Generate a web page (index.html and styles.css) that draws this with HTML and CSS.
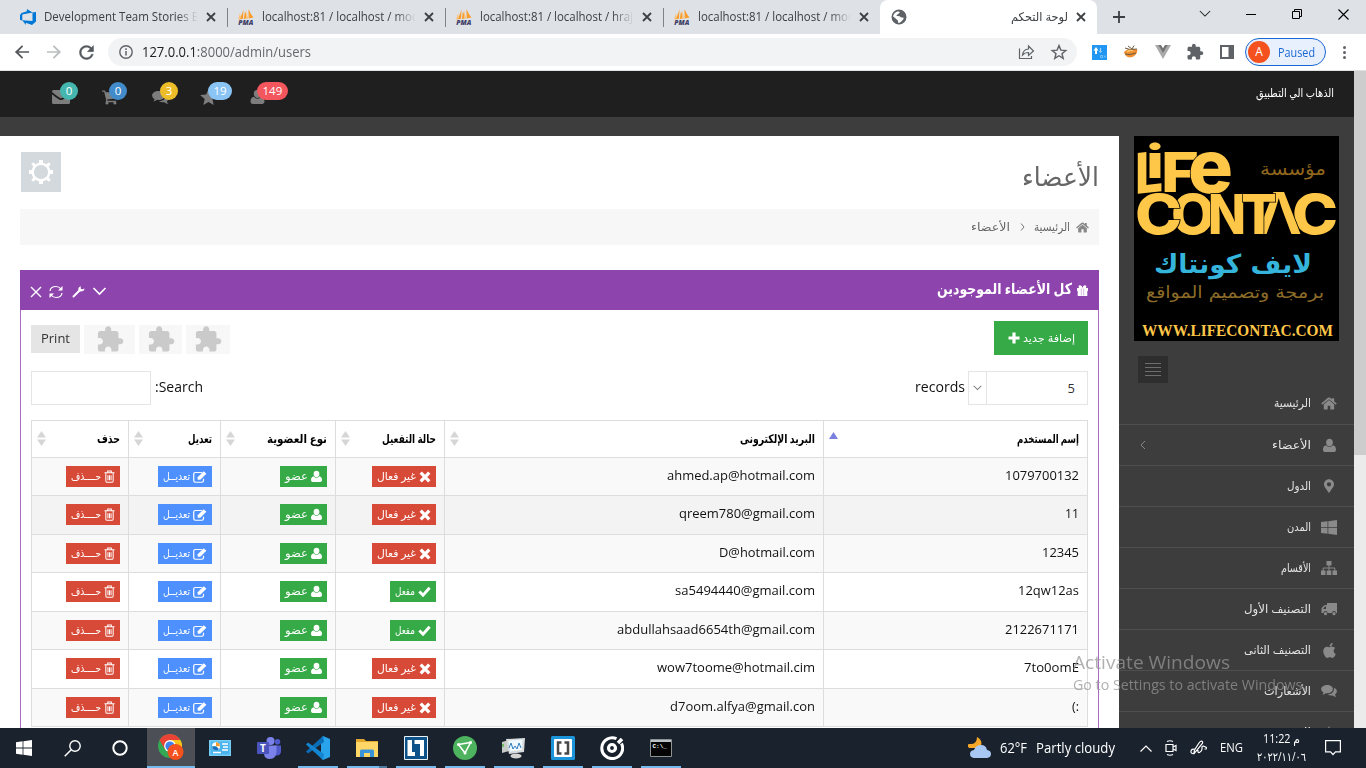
FILE: index.html
```html
<!DOCTYPE html>
<html lang="ar">
<head>
<meta charset="utf-8">
<title>لوحة التحكم</title>
<link rel="stylesheet" href="styles.css">
</head>
<body>
<svg class="sprite" width="0" height="0">
  <symbol id="x" viewBox="0 0 10 10"><path d="M1 1l8 8M9 1L1 9" stroke="currentColor" stroke-width="1.8" fill="none"/></symbol>
  <symbol id="pma" viewBox="0 0 16 16"><path d="M5.500 0Q4 7 .5 10.500L5 9.800zM7 2.500L5.800 10l4-.8zM10.500 0l.2 9.500L15.500 8.500Q13 6 10.500 0z" fill="#f89c2c"/><path d="M2 4l1 5-3 1.500zM8 1l2 8-2 .5z" fill="#fbc581"/><text x="0.300" y="15.500" textLength="15" lengthAdjust="spacingAndGlyphs" font-family="Open Sans, sans-serif" font-size="6.500" font-weight="800" font-style="italic" fill="#3e4068">PMA</text></symbol>
  <symbol id="user" viewBox="0 0 14 16"><path d="M7 .8c2.100 0 3.700 1.600 3.700 3.900S9.100 9 7 9 3.300 7 3.300 4.700 4.900.8 7 .8zM3.500 7.700C4.500 9 5.700 9.700 7 9.700S9.500 9 10.500 7.700c2.300.3 3.500 2 3.500 4.800 0 1.500-1 2.500-2.400 2.500H2.400C1 15 0 14 0 12.500c0-2.800 1.200-4.500 3.500-4.800z" fill="currentColor"/></symbol>
  <symbol id="home" viewBox="0 0 18 15"><path d="M9 3.600l6 5V13.500q0 .8-.8.800H10.500V10h-3v4.300H3.800Q3 14.300 3 13.500V8.600zM9 .5q.8 0 1.300.5L12.300 2.700V1.300h2.600v3.600L17.900 7.500l-1.200 1.300L9 2.500 1.300 8.800.1 7.500 7.700 1Q8.200.5 9 .5z" fill="currentColor"/></symbol>
  <symbol id="chats" viewBox="0 0 18 16"><path d="M7 1c3.700 0 6.500 2.100 6.500 4.800S10.700 10.600 7 10.600q-.8 0-1.600-.1Q4 12 1.300 12.200 2.500 11 2.700 9.600 0 8.200 0 5.800C0 3.100 3.300 1 7 1z" fill="currentColor"/><path d="M14.700 4.300C16.800 5.200 18 6.600 18 8.400q0 2.200-2.200 3.500.3 1.600 1.700 2.700-2.800 0-4.400-1.600-3.400.5-5.800-1.100 7-.2 7.500-5.900z" fill="currentColor"/></symbol>
  <symbol id="mail" viewBox="0 0 18 14"><path d="M0 1.500Q0 0 1.500 0h15Q18 0 18 1.500v.3Q17 3.500 9 8.600 1 3.500 0 1.800zM0 4.200Q3 7 7.500 9.700q1.500.8 3 0Q15 7 18 4.200v8.300q0 1.500-1.500 1.500h-15Q0 14 0 12.500z" fill="currentColor"/></symbol>
  <symbol id="cart" viewBox="0 0 17 15"><path d="M0 0h3.200l.8 2H17v6.200L5.500 9.500V11H15v1.500H4L4.300 9.500 2.300 1.500H0z" fill="currentColor"/><circle cx="5.300" cy="13.500" r="1.500" fill="currentColor"/><circle cx="13.700" cy="13.500" r="1.500" fill="currentColor"/></symbol>
  <symbol id="star" viewBox="2 2 20 19"><path d="M12 17.300l6.200 3.700-1.600-7L22 9.200l-7.200-.6L12 2 9.200 8.600 2 9.200 7.500 14l-1.700 7z" fill="currentColor"/></symbol>
  <symbol id="puzzle" viewBox="0 0 24 24"><path d="M20.500 11H19V7c0-1.100-.9-2-2-2h-4V3.500C13 2.120 11.880 1 10.500 1S8 2.120 8 3.500V5H4c-1.100 0-1.990.9-1.990 2v3.800H3.500c1.490 0 2.700 1.210 2.700 2.700s-1.210 2.700-2.700 2.700H2V20c0 1.100.9 2 2 2h3.800v-1.500c0-1.490 1.210-2.700 2.700-2.700 1.490 0 2.700 1.210 2.700 2.700V22H17c1.100 0 2-.9 2-2v-4h1.500c1.380 0 2.500-1.120 2.500-2.500S21.880 11 20.500 11z" fill="currentColor"/></symbol>
  <symbol id="trash" viewBox="0 0 12 14"><path d="M4 2.500V1h4v1.500M.5 3h11M2 3.500V12q0 1.300 1 1.300h6q1 0 1-1.300V3.500M4.300 5.500v5.500M6 5.500v5.500M7.700 5.500v5.500" stroke="currentColor" fill="none" stroke-width="1.100"/></symbol>
  <symbol id="edit" viewBox="0 0 15 13"><path d="M9.500 1.600H2.500Q.7 1.600.7 3.300v7Q.7 12.200 2.500 12.200H9.500q1.800 0 1.800-1.900V8.300" stroke="currentColor" stroke-width="1.300" fill="none"/><path d="M5 6.700L11.500.3l2.900 2.700-6.600 6.500H5z" fill="currentColor"/></symbol>
  <symbol id="cross" viewBox="0 0 12 12"><path d="M1.700 1.700l8.600 8.600M10.300 1.700l-8.600 8.600" stroke="currentColor" stroke-width="3.300" fill="none"/></symbol>
  <symbol id="check" viewBox="0 0 14 12"><path d="M1.400 6l4 4L12.600 2" stroke="currentColor" stroke-width="3.200" fill="none"/></symbol>
  <symbol id="down" viewBox="0 0 14 9"><path d="M1 1l6 6 6-6" stroke="currentColor" stroke-width="1.600" fill="none"/></symbol>
  <symbol id="sort" viewBox="0 0 9 15"><path d="M4.500 0L9 6.500H0zM0 8.500h9L4.500 15z" fill="#d6d6d6"/></symbol>
</svg>

<header class="tabs">
  <div class="tab first">
    <svg width="16" height="16" viewBox="0 0 16 16"><path d="M16 3v9.600l-4 3.300-6.200-2.200v2.200L2.300 11.300l10.200.8V3.400zM12.600 3.500L6.900 0v2.300L1.600 3.900 0 6v4.700l2.300 1V5.500z" fill="#0078d7"/></svg>
    <span class="tabtext"><span class="fit" data-w="162">Development Team Stories Bo</span></span><svg width="10" height="10"><use href="#x"/></svg>
  </div>
  <div class="tab"><svg width="16" height="16"><use href="#pma"/></svg><span class="tabtext"><span class="fit" data-w="157">localhost:81 / localhost / mod</span></span><svg width="10" height="10"><use href="#x"/></svg></div>
  <div class="tab"><svg width="16" height="16"><use href="#pma"/></svg><span class="tabtext"><span class="fit" data-w="153">localhost:81 / localhost / hraj</span></span><svg width="10" height="10"><use href="#x"/></svg></div>
  <div class="tab last"><svg width="16" height="16"><use href="#pma"/></svg><span class="tabtext"><span class="fit" data-w="157">localhost:81 / localhost / mod</span></span><svg width="10" height="10"><use href="#x"/></svg></div>
  <div class="tab active">
    <svg width="18" height="18" viewBox="0 0 24 24"><circle cx="12" cy="12" r="9.500" fill="#5f6368"/><path d="M3.500 10.500Q5 6 9 4.500q5-.5 3.500 2L10 8.500q-2 .5-1 2l4 .5q1.500 2 3.500 1.500 2-.5 1.500 2l-2.500 3q-3 3-4.500 2.500l-.5-3.500-3-2.500z" fill="#fff"/><path d="M12 8l3 1.500 1 3 3-1V8l-4-3z" fill="#5f6368"/><circle cx="12" cy="12" r="9" fill="none" stroke="#5f6368" stroke-width="2"/></svg>
    <span class="tabtext ar" dir="rtl"><span class="fit" data-w="57">لوحة التحكم</span></span><svg width="10" height="10"><use href="#x"/></svg>
  </div>
  <svg class="plus" width="12" height="12" viewBox="0 0 12 12"><path d="M6 0v12M0 6h12" stroke="#3c4043" stroke-width="1.800"/></svg>
  <div class="winctl">
    <svg width="12" height="8" viewBox="0 0 14 9"><path d="M1 1l6 6 6-6" stroke="#222" stroke-width="1.200" fill="none"/></svg>
    <svg width="10" height="10" viewBox="0 0 10 10"><path d="M0 5.500h10" stroke="#000"/></svg>
    <svg width="10" height="10" viewBox="0 0 10 10"><path d="M.5 2.500h7v7h-7zM2.500 2.500v-2h7v7h-2" stroke="#000" fill="none"/></svg>
    <svg width="11" height="11" viewBox="0 0 11 11"><path d="M.5.5l10 10M10.500.5l-10 10" stroke="#000" stroke-width="1.100"/></svg>
  </div>
</header>

<div class="toolbar">
  <span class="slot"><svg width="20" height="20" viewBox="0 0 24 24"><path d="M20.500 11H7.800l5.600-5.600L12 4l-8.500 8 8.500 8 1.400-1.400L7.800 13h12.700z" fill="#55595e"/></svg></span>
  <span class="slot"><svg width="20" height="20" viewBox="0 0 24 24"><path d="M3.500 11h12.700l-5.600-5.600L12 4l8.500 8-8.500 8-1.400-1.400 5.600-5.600H3.500z" fill="#bbbdbf"/></svg></span>
  <span class="slot"><svg width="21" height="21" viewBox="0 0 24 24"><path d="M17.650 6.350C16.200 4.900 14.210 4 12 4c-4.420 0-7.990 3.580-7.990 8s3.570 8 7.990 8c3.730 0 6.840-2.550 7.730-6h-2.080c-.82 2.330-3.040 4-5.650 4-3.310 0-6-2.690-6-6s2.690-6 6-6c1.660 0 3.140.69 4.220 1.780L13 11h7V4l-2.350 2.350z" fill="#55595e" stroke="#55595e" stroke-width=".5"/></svg></span>
  <div class="omni">
    <svg width="14" height="14" viewBox="0 0 14 14"><circle cx="7" cy="7" r="6.200" fill="none" stroke="#5f6368" stroke-width="1.400"/><path d="M7 6v4.500M7 3.300v1.600" stroke="#5f6368" stroke-width="1.500"/></svg>
    <span class="url"><span class="fit" data-w="169"><b>127.0.0.1</b>:8000/admin/users</span></span>
    <svg width="17" height="17" viewBox="0 0 17 17"><path d="M1.500 4.500v10h12V12M4.500 11q.5-5.500 6-6V2l5 5-5 4.500V8.500Q7 8.300 4.500 11z" fill="none" stroke="#5f6368" stroke-width="1.200"/></svg>
    <svg width="18" height="18" viewBox="0 0 24 24"><path d="M12 3.500l2.500 6 6.500.5-5 4.200 1.600 6.300L12 17l-5.600 3.500L8 14.200 3 10l6.500-.5z" fill="none" stroke="#5f6368" stroke-width="1.900"/></svg>
  </div>
  <span class="slot"><svg width="15" height="15" viewBox="0 0 15 15"><path d="M0 0h15v15H0z" fill="#2196f3"/><path d="M4 9V4" stroke="#fff" stroke-width="2"/><path d="M8.500 3v3" stroke="#9fd3fb" stroke-width="1.200"/><path d="M1.500 5.500L4 2l2.500 3.500z" fill="#fff"/><path d="M6.800 6h3.400L8.500 8z" fill="#9fd3fb"/><path d="M8.500 10.500h2v2h-2zM12 10.500l2 2M14 10.500l-2 2" stroke="#8cc8fa" stroke-width=".8" fill="none"/></svg></span>
  <span class="slot"><svg width="16" height="14" viewBox="0 0 16 14"><path d="M1 7Q5 2 14.500 4.500q-.5 7-7.500 8Q2 12 1 7z" fill="#ee8e2e"/><path d="M2 3l5 1.500L14 4M5 1l4 3 2-3.500M2 9l5 .5 6-1.500" stroke="#6b5a48" fill="none"/><path d="M4 7q3-3 6-1" stroke="#fcc768" stroke-width="1.500" fill="none"/></svg></span>
  <span class="slot"><svg width="16" height="14" viewBox="0 0 16 14"><path d="M0 0h3.500L8 7.500 12.500 0H16L8 14z" fill="#aaa"/><path d="M3.200 0H6l2 3.300L10 0h2.800L8 8z" fill="#737373"/></svg></span>
  <span class="slot grey"><svg width="18" height="18"><use href="#puzzle"/></svg></span>
  <span class="slot"><svg width="14" height="14" viewBox="0 0 14 14"><path d="M1 1h12v12H1z" stroke="#5f6368" stroke-width="2" fill="none"/><path d="M8.500 1H13v12H8.500z" fill="#5f6368"/></svg></span>
  <div class="pill"><span class="avatar">A</span><span class="fit" data-w="37">Paused</span></div>
  <span class="slot more"><i></i><i></i><i></i></span>
</div>

<div class="viewport">
<div class="page" dir="rtl">
  <div class="topnav">
    <span class="fit applink" data-w="78">الذهاب الي التطبيق</span>
    <div class="notes" dir="ltr">
      <span class="note"><svg width="18" height="14"><use href="#mail"/></svg><em class="teal">0</em></span>
      <span class="note"><svg width="16" height="15"><use href="#cart"/></svg><em class="blue">0</em></span>
      <span class="note"><svg width="17" height="15"><use href="#chats"/></svg><em class="gold">3</em></span>
      <span class="note"><svg width="17" height="16"><use href="#star"/></svg><em class="sky">19</em></span>
      <span class="note"><svg width="15" height="16"><use href="#user"/></svg><em class="red">149</em></span>
    </div>
  </div>
  <div class="columns">
    <aside class="side">
      <svg class="logo" width="205" height="205" viewBox="0 0 205 205" direction="ltr">
        <rect width="205" height="205"/>
        <g class="mark" fill="#fec748" font-family="Inter, sans-serif" font-weight="800">
          <text x="1" y="56" font-size="56" textLength="28" lengthAdjust="spacingAndGlyphs" transform="skewY(-6) translate(0 2)">L</text>
          <text x="12" y="42" font-size="46" textLength="18" lengthAdjust="spacingAndGlyphs">i</text>
          <text x="27" y="56" font-size="55" textLength="38" lengthAdjust="spacingAndGlyphs">F</text>
          <text x="54" y="57" font-size="74" textLength="45" lengthAdjust="spacingAndGlyphs">e</text>
          <text x="158" y="98" font-size="55" textLength="46" lengthAdjust="spacingAndGlyphs">C</text>
          <text x="37" y="98" font-size="55" textLength="44" lengthAdjust="spacingAndGlyphs">O</text>
          <text x="1" y="98" font-size="55" textLength="47" lengthAdjust="spacingAndGlyphs">C</text>
          <text x="74" y="98" font-size="55" textLength="38" lengthAdjust="spacingAndGlyphs">N</text>
          <text x="122" y="98" font-size="58" textLength="46" lengthAdjust="spacingAndGlyphs" font-weight="600">Λ</text>
          <text x="107" y="98" font-size="55" textLength="36" lengthAdjust="spacingAndGlyphs">T</text>
        </g>
        <g font-family="DejaVu Sans, sans-serif" direction="rtl">
          <text x="192" y="39" font-size="18" textLength="66" lengthAdjust="spacingAndGlyphs" fill="#91671d">مؤسسة</text>
          <text x="178" y="137" font-size="26" font-weight="700" textLength="158" lengthAdjust="spacingAndGlyphs" fill="#36b5dc">لايف كونتاك</text>
          <text x="190" y="162" font-size="17" textLength="178" lengthAdjust="spacingAndGlyphs" fill="#8c6c28">برمجة وتصميم المواقع</text>
        </g>
        <text x="8" y="200" font-size="17.500" font-family="Liberation Serif, serif" font-weight="700" textLength="191" lengthAdjust="spacingAndGlyphs" fill="#fec748">WWW.LIFECONTAC.COM</text>
      </svg>
      <div class="toggle"><i></i><i></i><i></i><i></i></div>
      <ul class="menu">
        <li><span class="mi"><svg width="16" height="13"><use href="#home"/></svg></span><span class="fit" data-w="37">الرئيسية</span></li>
        <li><span class="mi"><svg width="13" height="15"><use href="#user"/></svg></span><span class="fit" data-w="39">الأعضاء</span><svg class="arrow" width="6" height="10" viewBox="0 0 6 10"><path d="M5 1L1 5l4 4" stroke="#888" fill="none"/></svg></li>
        <li><span class="mi"><svg width="10" height="14" viewBox="0 0 384 512"><path d="M172.268 501.670C26.970 291.031 0 269.413 0 192 0 85.961 85.961 0 192 0s192 85.961 192 192c0 77.413-26.970 99.031-172.268 309.670-9.535 13.774-29.930 13.773-39.464 0zM192 272c44.183 0 80-35.817 80-80s-35.817-80-80-80-80 35.817-80 80 35.817 80 80 80z" fill="currentColor"/></svg></span><span class="fit" data-w="24">الدول</span></li>
        <li><span class="mi"><svg width="16" height="17" viewBox="0 0 448 512" preserveAspectRatio="none"><path d="M0 93.700l183.600-25.300v177.400H0V93.700zm0 324.600l183.600 25.300V268.400H0v149.900zm203.800 28L448 480V268.400H203.800v177.900zm0-380.600v180.100H448V32L203.800 65.700z" fill="currentColor"/></svg></span><span class="fit" data-w="24">المدن</span></li>
        <li><span class="mi"><svg width="16" height="14" viewBox="0 0 16 14"><path d="M5.500 0h5v4.500h-5zM0 9.500h4.500V14H0zM5.700 9.500h4.600V14H5.700zM11.500 9.500H16V14h-4.500z" fill="currentColor"/><path d="M8 4v6M2.200 10V7h11.600v3" stroke="currentColor" fill="none"/></svg></span><span class="fit" data-w="30">الأقسام</span></li>
        <li><span class="mi"><svg width="16" height="13" viewBox="0 0 16 13"><path d="M6 0h10v10h-1a2 2 0 0 0-4 0H6.500a2 2 0 0 0-4 0H.5V6Q.5 5 1.500 4L3 2.500Q3.500 2 4.500 2H6zM2 6h3V3.500H4z" fill="currentColor" fill-rule="evenodd"/><circle cx="4.500" cy="10.700" r="1.600" fill="currentColor"/><circle cx="13" cy="10.700" r="1.600" fill="currentColor"/></svg></span><span class="fit" data-w="67">التصنيف الأول</span></li>
        <li><span class="mi"><svg width="13" height="17" viewBox="0 0 384 512"><path d="M318.700 268.700c-.2-36.700 16.400-64.400 50-84.800-18.800-26.900-47.200-41.700-84.700-44.600-35.500-2.800-74.300 20.700-88.500 20.700-15 0-49.400-19.700-76.400-19.700C63.300 141.200 4 184.800 4 273.500q0 39.300 14.400 81.200c12.800 36.700 59 126.700 107.200 125.200 25.200-.6 43-17.900 75.800-17.900 31.800 0 48.300 17.900 76.400 17.900 48.600-.7 90.400-82.500 102.600-119.300-65.200-30.700-61.700-90-61.700-91.900zm-56.600-164.200c27.300-32.400 24.800-61.900 24-72.500-24.100 1.400-52 16.400-67.900 34.900-17.500 19.800-27.800 44.300-25.600 71.900 26.100 2 49.900-11.400 69.500-34.300z" fill="currentColor"/></svg></span><span class="fit" data-w="67">التصنيف الثانى</span></li>
        <li><span class="mi"><svg width="16" height="14"><use href="#chats"/></svg></span><span class="fit" data-w="47">الأشعارات</span></li>
        <li><span class="mi"><svg width="14" height="13"><use href="#star"/></svg></span><span class="fit" data-w="40">المميزة</span></li>
      </ul>
    </aside>

    <main class="content">
      <div class="titlerow">
        <h1><span class="fit" data-w="77">الأعضاء</span></h1>
        <span class="gear"><svg width="24" height="24" viewBox="0 0 24 24"><g stroke="#fff" fill="none"><circle cx="12" cy="12" r="8.300" stroke-width="2.400"/><path d="M12 0v3.500M12 20.500V24M0 12h3.500M20.500 12H24" stroke-width="4"/><path d="M3.300 3.300l2.700 2.700M18 18l2.700 2.700M3.300 20.700L6 18M18 6l2.700-2.700" stroke-width="3"/></g></svg></span>
      </div>
      <div class="crumbs"><svg width="13" height="11"><use href="#home"/></svg><span class="fit" data-w="36">الرئيسية</span><svg class="sep" width="5" height="8" viewBox="0 0 5 8"><path d="M1 .5L4 4 1 7.500" stroke="#777" fill="none"/></svg><span class="fit" data-w="39">الأعضاء</span></div>

      <section class="panel">
        <div class="phead">
          <svg width="11" height="11" viewBox="0 0 11 11"><path d="M0 3h11v3h-.7v5H.7V6H0zM2 3Q.8 0 3 .3T5.500 3Q6 0 8 .3T9 3z" fill="#fff"/><path d="M4.300 3.500v7M6.700 3.500v7" stroke="#b98acb" stroke-width=".6"/></svg>
          <span class="fit" data-w="135">كل الأعضاء الموجودين</span>
          <div class="tools" dir="ltr">
            <svg width="12" height="12" viewBox="0 0 12 12"><path d="M1 1l10 10M11 1L1 11" stroke="#fff" stroke-width="1.400"/></svg>
            <svg width="14" height="14" viewBox="0 0 14 14"><path d="M1 6Q1.500 1.500 7 1.500q3 0 5 2.500M13 8q-.5 4.500-6 4.500-3 0-5-2.500" stroke="#fff" fill="none" stroke-width="1.200"/><path d="M13.500 1v4.500H9zM.5 13V8.500H5z" fill="#fff"/></svg>
            <svg width="13" height="13" viewBox="0 0 13 13"><path d="M1.500 11.500L7.500 5.500" stroke="#fff" stroke-width="2" stroke-linecap="round"/><path d="M9 1.200Q6 2 6.300 5 8 7.500 11.500 5.700q1-.8 1-2.200l-2.500 1-1.500-1.200z" fill="#fff"/></svg>
            <svg width="15" height="9"><use href="#down"/></svg>
          </div>
        </div>
        <div class="pbody">
          <div class="actions">
            <span class="add"><span class="fit" data-w="52">إضافة جديد</span><svg width="12" height="12" viewBox="0 0 12 12"><path d="M6 .5v11M.5 6h11" stroke="#fff" stroke-width="3.200"/></svg></span>
            <div class="exports" dir="ltr">
              <span class="print"><span class="fit" data-w="29">Print</span></span>
              <span class="plug p1"><svg width="30" height="29"><use href="#puzzle"/></svg></span>
              <span class="plug p2"><svg width="30" height="29"><use href="#puzzle"/></svg></span>
              <span class="plug p3"><svg width="30" height="29"><use href="#puzzle"/></svg></span>
            </div>
          </div>
          <div class="filters">
            <span class="select"><span class="val">5</span><span class="dd"><svg width="9" height="6"><use href="#down"/></svg></span></span>
            <span class="fit lbl" data-w="50">records</span>
            <span class="fit lbl search" data-w="48">Search:</span>
            <span class="input"></span>
          </div>
          <table>
            <colgroup><col class="c1"><col class="c2"><col class="c3"><col class="c4"><col class="c5"><col class="c6"></colgroup>
            <thead><tr>
              <th><div><span class="fit" data-w="62">إسم المستخدم</span><svg class="up" width="9" height="7" viewBox="0 0 9 7"><path d="M4.500 0L9 7H0z" fill="#7a80dd"/></svg></div></th>
              <th><div><span class="fit" data-w="75">البريد الإلكترونى</span><svg width="9" height="15"><use href="#sort"/></svg></div></th>
              <th><div><span class="fit" data-w="54">حالة التفعيل</span><svg width="9" height="15"><use href="#sort"/></svg></div></th>
              <th><div><span class="fit" data-w="60">نوع العضوية</span><svg width="9" height="15"><use href="#sort"/></svg></div></th>
              <th><div><span class="fit" data-w="24">تعديل</span><svg width="9" height="15"><use href="#sort"/></svg></div></th>
              <th><div><span class="fit" data-w="23">حذف</span><svg width="9" height="15"><use href="#sort"/></svg></div></th>
            </tr></thead>
            <tbody id="rows"></tbody>
          </table>
        </div>
      </section>
    </main>
  </div>
</div>
<div class="scroll"><div class="thumb"></div></div>
</div>

<footer class="taskbar">
  <span class="app sys"><svg width="16" height="16" viewBox="0 0 16 16"><path d="M0 2.200L6.600 1.300V7.600H0zM7.400 1.200L16 0v7.600H7.400zM0 8.400h6.600v6.300L0 13.800zM7.400 8.400H16V16l-8.600-1.200z" fill="#fff"/></svg></span>
  <span class="app sys"><svg width="17" height="17" viewBox="0 0 17 17"><circle cx="11" cy="6" r="5.200" fill="none" stroke="#fff" stroke-width="1.400"/><path d="M7.200 9.800L.7 16.300" stroke="#fff" stroke-width="1.500"/></svg></span>
  <span class="app sys"><svg width="16" height="16" viewBox="0 0 16 16"><circle cx="8" cy="8" r="6.700" fill="none" stroke="#fff" stroke-width="2"/></svg></span>
  <span class="app chrome"><svg width="28" height="28" viewBox="0 0 28 28"><circle cx="13" cy="13" r="12" fill="#34a853"/><path d="M13 25L18.500 13 13 7h10.400A12 12 0 0 1 13 25z" fill="#fbc116"/><path d="M2.500 7l5.200 9L13 7h10.400A12 12 0 0 0 2.500 7z" fill="#ea4335"/><circle cx="13" cy="13" r="5.900" fill="#fff"/><circle cx="13" cy="13" r="4.600" fill="#3f82ee"/><circle cx="18.500" cy="19" r="8" fill="#f4511e"/><text x="18.500" y="22.500" text-anchor="middle" font-size="9" font-family="Open Sans, sans-serif" font-weight="600" fill="#fff">A</text></svg></span>
  <span class="app"><svg width="22" height="16" viewBox="0 0 22 16"><path d="M0 0h22v16H0z" fill="#75cdf7"/><path d="M1.500 1.500h19v13h-19z" fill="#4ab3ec"/><circle cx="7" cy="6.300" r="4" fill="#fff"/><path d="M7 6.300V2.300a4 4 0 0 1 3.900 4z" fill="#f39c2d"/><path d="M7 6.300l3 2.700A4 4 0 0 1 3 6.300z" fill="#1672bf"/><path d="M13 4h6M14 7h5M13 10h6M4 12.500h8" stroke="#fff" stroke-width="1.300"/></svg></span>
  <span class="app"><svg width="24" height="22" viewBox="0 0 24 22"><circle cx="20.500" cy="4.800" r="2.800" fill="#5059c9"/><circle cx="13.500" cy="4" r="4" fill="#7b83eb"/><path d="M17 8.500h7V15q-1 4-5 3.500z" fill="#5059c9"/><path d="M7 8.500h12.500V15q-.5 7-6.500 7t-6-6z" fill="#7b83eb"/><rect y="5" width="12" height="12" rx="1" fill="#4b53bc"/><text x="6" y="14.500" font-size="10" font-weight="700" font-family="Open Sans, sans-serif" text-anchor="middle" fill="#fff">T</text></svg></span>
  <span class="app run"><svg width="24" height="24" viewBox="0 0 24 24"><path d="M17 0L24 3v18l-7 3-2-2V2z" fill="#29a3ec"/><path d="M17 0L0 15.500 2 17.500 18 6z" fill="#0b6db5"/><path d="M17 24L0 8.500 2 6.500 18 18z" fill="#1485d1"/></svg></span>
  <span class="app run split"><svg width="22" height="18" viewBox="0 0 22 18"><path d="M0 0h8l2 2h12v16H0z" fill="#e1a82d"/><path d="M0 3h22v15H0z" fill="#ffd766"/><path d="M4 18v-6q0-1.500 1.500-1.500h11Q18 10.500 18 12v6h-4v-4H8v4z" fill="#3a94da"/></svg></span>
  <span class="app run"><svg width="24" height="24" viewBox="0 0 24 24"><path d="M.5.500h23v23H.5z" fill="#0d5288" stroke="#e8f2f8"/><path d="M3.500 4h4.500v12h3v4H3.500zM10.500 4H20v16h-4V8h-5.500z" fill="#fff"/></svg></span>
  <span class="app run"><svg width="24" height="24" viewBox="0 0 24 24"><circle cx="12" cy="12" r="12" fill="#4db35e"/><path d="M5.500 8.500L17.500 6.500 12 17z" fill="none" stroke="#fff" stroke-width="1.500"/><circle cx="5.500" cy="8.500" r="1.500" fill="#fff"/><circle cx="17.500" cy="6.500" r="1.500" fill="#fff"/><circle cx="12" cy="17" r="1.500" fill="#fff"/></svg></span>
  <span class="app run"><svg width="24" height="22" viewBox="0 0 24 22"><path d="M0 5l7-2v11l-7 2z" fill="#c7cbc8"/><path d="M4 2l19-1-1 14L7 17z" fill="#d8dbdc"/><path d="M6.500 3.500l14-1-.6 10.500L8 14.500z" fill="#eef8fd"/><path d="M7 11l2-5 2 6 2-3 2 3 2-6 2 5" stroke="#327fc0" fill="none"/><ellipse cx="14" cy="19" rx="5.500" ry="2.500" fill="#d4d4d2"/><path d="M1 7v3" stroke="#58b947" stroke-width="1.500"/></svg></span>
  <span class="app run"><svg width="24" height="24" viewBox="0 0 24 24"><rect width="24" height="24" rx="1.500" fill="#1c94da"/><rect x="3" y="3" width="18" height="18" rx="1" fill="#fff"/><path d="M10.500 6.500H7v11h3.500M13.500 6.500H17v11h-3.500" stroke="#484848" stroke-width="2.500" fill="none"/></svg></span>
  <span class="app run"><svg width="24" height="24" viewBox="0 0 24 24"><path d="M21.500 7.500A10.400 10.400 0 1 1 16.500 2.700" fill="none" stroke="#fff" stroke-width="3"/><circle cx="12" cy="12" r="3.500" fill="none" stroke="#fff" stroke-width="3.200"/><path d="M18 7l4-4" stroke="#fff" stroke-width="3.500"/></svg></span>
  <span class="app run"><svg width="22" height="18" viewBox="0 0 22 18"><path d="M.5.500h21v17H.5z" fill="#050505" stroke="#8d9292"/><path d="M1 1h20v2H1z" fill="#bbc3c6"/><text x="2.500" y="9" font-size="6" font-family="Liberation Mono, monospace" font-weight="700" fill="#fff">C:\_</text></svg></span>
  <div class="tray">
    <svg class="weather" width="24" height="22" viewBox="0 0 24 22"><path d="M9 0q7 4 3 11H1q-3-3 0-4 8 1 8-7z" fill="#f7a728"/><path d="M6 21q-4-.5-4-4t4-4q2-5 7-5t6 5q4 .5 4 4t-4 4z" fill="#a8c8f4"/></svg>
    <span class="fit temp" data-w="27">62°F</span><span class="fit cloud" data-w="79">Partly cloudy</span>
    <svg class="chev" width="12" height="7" viewBox="0 0 12 7"><path d="M.5 6.500L6 1l5.500 5.500" stroke="#fff" stroke-width="1.200" fill="none"/></svg>
    <svg class="meet" width="12" height="16" viewBox="0 0 12 16"><path d="M2 1.500Q5 0 8 1.500M2 14.500q3 1.500 6 0M1 4.500h7v7H1zM8 7l3-1.500v5L8 9" stroke="#fff" fill="none" stroke-width="1.200"/></svg>
    <svg class="pen" width="17" height="16" viewBox="0 0 17 16"><path d="M5 9.500Q1.500 8.500 1 11q-.3 3 3 2.700L12 4q1.500-2.300-.3-3Q10.500.8 9 3L4.500 10l-.7 3.500M8 10q-.5 3 1.500 2.500 3-1.500 2.500-4.500t3.500-1-1 2" stroke="#fff" fill="none" stroke-width="1.200"/></svg>
    <span class="fit eng" data-w="23">ENG</span>
    <div class="clock"><span dir="rtl" class="fit" data-w="37">م 11:22</span><span dir="ltr" class="fit" data-w="49">٢٠٢٢/١١/٠٦</span></div>
    <svg class="bell" width="16" height="16" viewBox="0 0 16 16"><path d="M.6.600h14.800v11.200H10.500L8 14.500 5.500 11.800H.6z" stroke="#fff" fill="none" stroke-width="1.200"/></svg>
  </div>
</footer>
<div class="watermark"><div><span class="fit" data-w="157">Activate Windows</span></div><p><span class="fit" data-w="233">Go to Settings to activate Windows.</span></p></div>
<script src="app.js"></script>
</body>
</html>
```
FILE: styles.css
```css
* { box-sizing: border-box; }
body { margin: 0; width: 1366px; height: 768px; overflow: hidden; display: flex; flex-direction: column; font-family: "Open Sans", "DejaVu Sans", sans-serif; position: relative; background: #3d3d3d; }
.sprite { position: absolute; }
svg { flex: none; display: block; }
.fit { display: inline-block; white-space: nowrap; flex: none; }

.tabs { height: 34px; flex: none; background: #dee1e6; display: flex; align-items: stretch; color: #3c4043; font-size: 12px; }
.tab { width: 218px; display: flex; align-items: center; padding: 0 12px 0 10px; gap: 8px; }
.tab:not(.last):not(.active) { background: linear-gradient(#808387, #808387) right 8px / 1px 19px no-repeat; }
.tab.first { width: 228px; padding-left: 20px; padding-right: 12px; }
.tabtext { flex: 1; overflow: hidden; line-height: 18px; }
.tab:not(.active) .tabtext { -webkit-mask: linear-gradient(90deg, #000 86%, transparent); mask: linear-gradient(90deg, #000 86%, transparent); }
.tab.last { width: 216px; padding-right: 11px; }
.tab.active { width: 217px; background: #fff; border-radius: 8px 8px 0 0; padding: 0 11px 0 10px; }
.plus { align-self: center; margin-left: 16px; }
.winctl { margin-left: auto; height: 28px; display: grid; grid-template-columns: repeat(4, 46px); place-items: center; }

.toolbar { height: 37px; flex: none; background: #fff; border-bottom: 1px solid #dfe1e3; display: flex; align-items: center; padding-left: 6px; }
.slot { width: 32px; display: grid; place-items: center; }
.grey { color: #5f6368; }
.omni { width: 969px; height: 28px; margin: 0 6px; border-radius: 14px; background: #f1f3f4; display: flex; align-items: center; padding: 0 9px 0 11px; gap: 9px; }
.url { flex: 1; font-size: 14px; color: #65696e; line-height: 20px; }
.omni > svg:last-child { margin-left: 6px; }
.url b { font-weight: 400; color: #202124; }
.pill { width: 81px; height: 28px; margin-left: 2px; border: 1.500px solid #1967d2; border-radius: 14px; background: #e8f0fe; display: flex; align-items: center; gap: 8px; padding-left: 2px; font-size: 12px; color: #1967d2; }
.avatar { width: 22px; height: 22px; border-radius: 50%; background: #f4511e; color: #fff; text-align: center; line-height: 22px; }
.more { width: 36px; gap: 2px; }
.more i { width: 3px; height: 3px; border-radius: 50%; background: #5f6368; }

.viewport { height: 657px; flex: none; display: flex; overflow: hidden; }
.page { width: 1354px; overflow: hidden; background: #3d3d3d; }
.scroll { width: 12px; background: #ebebeb; }
.thumb { height: 384px; background: #cdcdcd; }
.topnav { height: 46px; background: #1f1f1f; display: flex; justify-content: space-between; align-items: flex-start; padding: 0 20px 0 52px; }
.applink { color: #fff; font-size: 12px; line-height: 18px; margin-top: 13px; }
.notes { display: flex; color: #7d7d7d; }
.note { width: 50px; height: 40px; padding-top: 19px; position: relative; }
.note:nth-child(n+4) { padding-top: 18px; }
.note:nth-child(n+4) svg { margin-left: -2px; }
.note em { position: absolute; left: 8px; top: 11px; height: 18px; min-width: 18px; padding: 0 5.500px; border-radius: 9px; color: #fff; font: 11.500px/18px "Open Sans", sans-serif; text-align: center; }
.note em.sky { left: 6px; } .note em.red { left: 5px; } .note em.blue { left: 7px; }
.teal { background: #45b6af; } .blue { background: #428bca; } .gold { background: #ecbc29; } .sky { background: #89c4f4; } .red { background: #f3565d; }

.columns { display: flex; padding-top: 19px; }
.side { width: 235px; flex: none; }
.logo { margin-right: 15px; }
.mark text { stroke: #000; stroke-width: 1.500px; paint-order: stroke; }
.toggle { width: 30px; height: 27px; margin: 15px 186px 0 0; background: #2e2e2e; display: flex; flex-direction: column; gap: 3px; padding: 7px; }
.toggle i { height: 1px; background: #6e6e6e; }
.menu { list-style: none; margin: 0; padding: 0; color: #e4e4e4; font-size: 11.500px; }
.menu li { height: 41px; display: flex; align-items: center; padding: 0 17px; gap: 10px; border-bottom: 1px solid #4f4f4f; line-height: 18px; }
.menu li:first-child { height: 42px; padding-bottom: 1px; }
.mi { width: 16px; display: grid; place-items: center; color: #8a8a8a; }
.arrow { margin-right: auto; margin-left: 4px; }

.content { width: 1119px; height: 611px; background: #fff; padding: 0 20px; }
.titlerow { height: 73px; display: flex; justify-content: space-between; padding: 16px 0 0 1px; }
h1 { margin: 0; font-weight: 400; font-size: 26px; line-height: 48px; color: #666; }
.gear { width: 40px; height: 40px; background: #d4d9dd; display: grid; place-items: center; }
.crumbs { height: 36px; background: #f7f7f7; display: flex; align-items: center; padding: 0 10px; gap: 6px; color: #888; font-size: 11.500px; line-height: 18px; }
.crumbs .sep { margin: 0 3px 0 4px; }
.crumbs .fit { color: #666; }
.panel { margin-top: 25px; }
.phead { height: 40px; background: #8e44ad; color: #fff; display: flex; align-items: center; gap: 5px; padding: 0 11px 0 10px; font-size: 15px; font-weight: 700; line-height: 22px; }
.phead .fit { margin-top: -4px; }
.tools { margin-right: auto; display: flex; align-items: center; gap: 8px; padding-top: 3px; }
.tools svg + svg { margin-left: -1px; }
.tools svg + svg + svg { margin-left: 1px; }
.tools svg + svg + svg + svg { margin-left: -1px; }
.pbody { border: solid #a96cc4; border-width: 0 1px; padding: 11px 10px 0; height: 420px; }
.actions { display: flex; justify-content: space-between; height: 50px; }
.add { width: 94px; height: 34px; background: #35aa47; color: #fff; display: flex; align-items: center; justify-content: center; gap: 3px; font-size: 11px; line-height: 18px; }
.exports { display: flex; gap: 4px; padding-top: 4px; }
.print { width: 49px; height: 28px; background: #e5e5e5; color: #333; font-size: 13px; line-height: 27px; text-align: center; }
.plug { height: 29px; background: #f7f7f7; color: #cacaca; display: grid; place-items: center; }
.p1 { width: 51px; } .p2 { width: 43px; } .p3 { width: 44px; }
.filters { display: flex; align-items: flex-start; height: 49px; color: #111; font-size: 14px; }
.select { width: 120px; height: 34px; border: 1px solid #e5e5e5; display: flex; justify-content: space-between; font-size: 13px; }
.val { padding: 0 12px; line-height: 32px; color: #333; }
.dd { width: 18px; border-right: 1px solid #e5e5e5; display: grid; place-items: center; color: #777; }
.lbl { line-height: 20px; margin: 6px 3px 0 0; }
.search { margin-right: auto; margin-left: 4px; }
.input { width: 120px; height: 34px; border: 1px solid #e5e5e5; }

table { width: 1057px; table-layout: fixed; border-spacing: 0; border-top: 1px solid #ddd; border-right: 1px solid #ddd; font-size: 13px; color: #111; }
.c1 { width: 264px; } .c2 { width: 379px; } .c3 { width: 109px; } .c4 { width: 115px; } .c5 { width: 92px; } .c6 { width: 97px; }
th, td { border-left: 1px solid #ddd; border-bottom: 1px solid #ddd; padding: 0 8px 0 0; }
th { height: 37px; color: #000; font-size: 12px; }
th div { display: flex; align-items: center; justify-content: space-between; padding-left: 5px; line-height: 20px; }
th div svg:not(.up) { margin-top: -1px; }
.up { margin-bottom: 8px; }
td { height: 38px; text-align: right; background: #f9f9f9; line-height: 18px; }
tr:nth-child(even) td { height: 39px; background: #f3f3f3; padding-bottom: 1px; }
tr.plain td { background: #fff; }
td > .fit { vertical-align: top; margin-bottom: 3px; }
.tag { display: inline-flex; vertical-align: top; align-items: center; gap: 3px; height: 21px; padding: 0 5px; color: #fff; font-size: 11px; line-height: 18px; }
.tag .fit { margin-top: -2px; }
.ok { background: #35aa47; } .no { background: #d84a38; } .ed { background: #4d90fe; }

.taskbar { height: 40px; flex: none; background: #1a222d; display: flex; color: #fff; position: relative; z-index: 2; }
.app { width: 40px; margin-left: 9px; display: grid; place-items: center; }
.app.sys { width: 48px; margin: 0; }
.app.chrome { width: 48px; margin-left: 3px; margin-right: -4px; background: #4c4f55; border-bottom: 2px solid #76b9ed; }
.app.run { border-bottom: 2px solid #76b9ed; padding-top: 2px; }
.app.split { border-image: linear-gradient(90deg, #76b9ed 78%, #4d7ba0 78%) 2; border-width: 0 0 2px; border-style: solid; }
.tray { margin-left: auto; display: flex; align-items: center; font-size: 14px; line-height: 20px; padding-right: 25px; }
.temp { margin-left: 8px; } .cloud { margin-left: 9px; } .chev { margin-left: 25px; } .meet { margin-left: 13px; } .pen { margin-left: 13px; }
.eng { margin-left: 13px; font-size: 12px; }
.clock { width: 50px; margin-left: 13px; display: flex; flex-direction: column; align-items: center; font-size: 12px; line-height: 18px; }
.bell { margin-left: 19px; }
.watermark { position: absolute; left: 1073px; top: 650px; color: rgba(150, 150, 150, .75); font-size: 19px; line-height: 25px; z-index: 1; }
.watermark p { margin: 0; font-size: 14px; line-height: 20px; }
```
FILE: app.js
```js
// [name, name width, email, email width, active, white row]
const users = [
  ["1079700132", 74, "ahmed.ap@hotmail.com", 148, false, false],
  ["11", 14, "qreem780@gmail.com", 136, false, false],
  ["12345", 37, "D@hotmail.com", 96, false, false],
  ["12qw12as", 61, "sa5494440@gmail.com", 140, true, true],
  ["2122671171", 74, "abdullahsaad6654th@gmail.com", 198, true, false],
  ["7to0omE", 55, "wow7toome@hotmail.cim", 158, false, true],
  [":)", 7, "d7oom.alfya@gmail.con", 145, false, false]
];
const fit = (t, w) => `<span class="fit" data-w="${w}">${t}</span>`;
const tag = (cls, icon, iw, ih, text, w) =>
  `<span class="tag ${cls}"><svg width="${iw}" height="${ih}"><use href="#${icon}"/></svg>${fit(text, w)}</span>`;

document.getElementById("rows").innerHTML = users.map(u => `<tr class="${u[5] ? "plain" : ""}">
  <td>${fit(u[0], u[1])}</td>
  <td>${fit(u[2], u[3])}</td>
  <td>${u[4] ? tag("ok", "check", 13, 11, "مفعل", 20) : tag("no", "cross", 12, 12, "غير فعال", 39)}</td>
  <td>${tag("ok", "user", 11, 13, "عضو", 23)}</td>
  <td>${tag("ed", "edit", 14, 12, "تعديــل", 27)}</td>
  <td>${tag("no", "trash", 11, 13, "حــــذف", 30)}</td>
</tr>`).join("");

document.querySelectorAll(".fit").forEach(el => {
  const w = +el.dataset.w;
  const natural = el.getBoundingClientRect().width;
  const rtl = getComputedStyle(el).direction === "rtl";
  el.style.width = w + "px";
  el.style.transformOrigin = rtl ? "100% 50%" : "0 50%";
  el.style.transform = `scaleX(${w / natural})`;
});
```
